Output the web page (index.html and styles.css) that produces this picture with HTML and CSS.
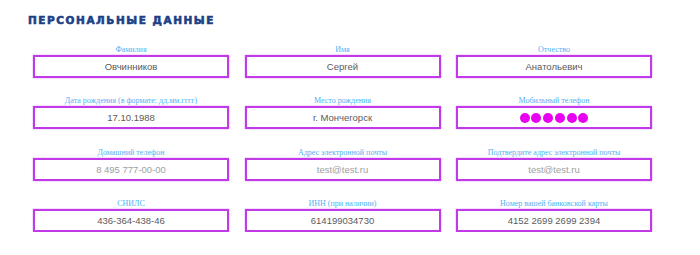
FILE: index.html
```html
<!DOCTYPE html>
<html lang="ru">
<head>
<meta charset="utf-8">
<link rel="stylesheet" href="styles.css">
</head>
<body>
<div class="page">
  <h2 class="title">ПЕРСОНАЛЬНЫЕ ДАННЫЕ</h2>
  <div class="grid">
    <div class="field"><div class="label">Фамилия</div><div class="input">Овчинников</div></div>
    <div class="field"><div class="label">Имя</div><div class="input">Сергей</div></div>
    <div class="field"><div class="label">Отчество</div><div class="input">Анатольевич</div></div>

    <div class="field"><div class="label">Дата рождения (в формате: дд.мм.гггг)</div><div class="input">17.10.1988</div></div>
    <div class="field"><div class="label">Место рождения</div><div class="input">г. Мончегорск</div></div>
    <div class="field"><div class="label">Мобильный телефон</div><div class="input"><span class="dots"><i></i><i></i><i></i><i></i><i></i><i></i></span></div></div>

    <div class="field"><div class="label">Домашний телефон</div><div class="input ph">8 495 777-00-00</div></div>
    <div class="field"><div class="label">Адрес электронной почты</div><div class="input ph">test@test.ru</div></div>
    <div class="field"><div class="label">Подтвердите адрес электронной почты</div><div class="input ph">test@test.ru</div></div>

    <div class="field"><div class="label">СНИЛС</div><div class="input">436-364-438-46</div></div>
    <div class="field"><div class="label">ИНН (при наличии)</div><div class="input">614199034730</div></div>
    <div class="field"><div class="label">Номер вашей банковской карты</div><div class="input">4152 2699 2699 2394</div></div>
  </div>
</div>
</body>
</html>
```
FILE: styles.css
```css
html, body {
  margin: 0;
  padding: 0;
  background: #fff;
}
.page {
  padding: 14px 0 0 33px;
}
.title {
  margin: 0 0 0 -5px;
  font-family: "DejaVu Sans", sans-serif;
  font-weight: 700;
  font-size: 10.5px;
  line-height: 13px;
  letter-spacing: 1.55px;
  color: #1c3f86;
  -webkit-text-stroke: 0.6px #1c3f86;
}
.grid {
  display: grid;
  grid-template-columns: repeat(3, 196px);
  column-gap: 15.5px;
  row-gap: 18.3px;
  margin-top: 18px;
}
.field {
  display: flex;
  flex-direction: column;
  align-items: stretch;
}
.label {
  font-family: "Liberation Serif", serif;
  font-size: 8px;
  line-height: 10px;
  height: 10px;
  color: #4fb2f5;
  text-align: center;
  white-space: nowrap;
}
.input {
  box-sizing: border-box;
  height: 23px;
  border: 2.5px solid #c23ae8;
  box-shadow: 0 0 1.5px rgba(200, 90, 255, 0.7);
  display: flex;
  align-items: center;
  justify-content: center;
  font-family: "Liberation Sans", sans-serif;
  font-size: 9.5px;
  color: #5a5a5a;
}
.input.ph {
  color: #a0a0a0;
}
.dots {
  display: flex;
}
.dots i {
  width: 10px;
  height: 10px;
  border-radius: 50%;
  background: #e800f0;
  margin-right: 1.7px;
}
.dots i:last-child {
  margin-right: 0;
}
```
